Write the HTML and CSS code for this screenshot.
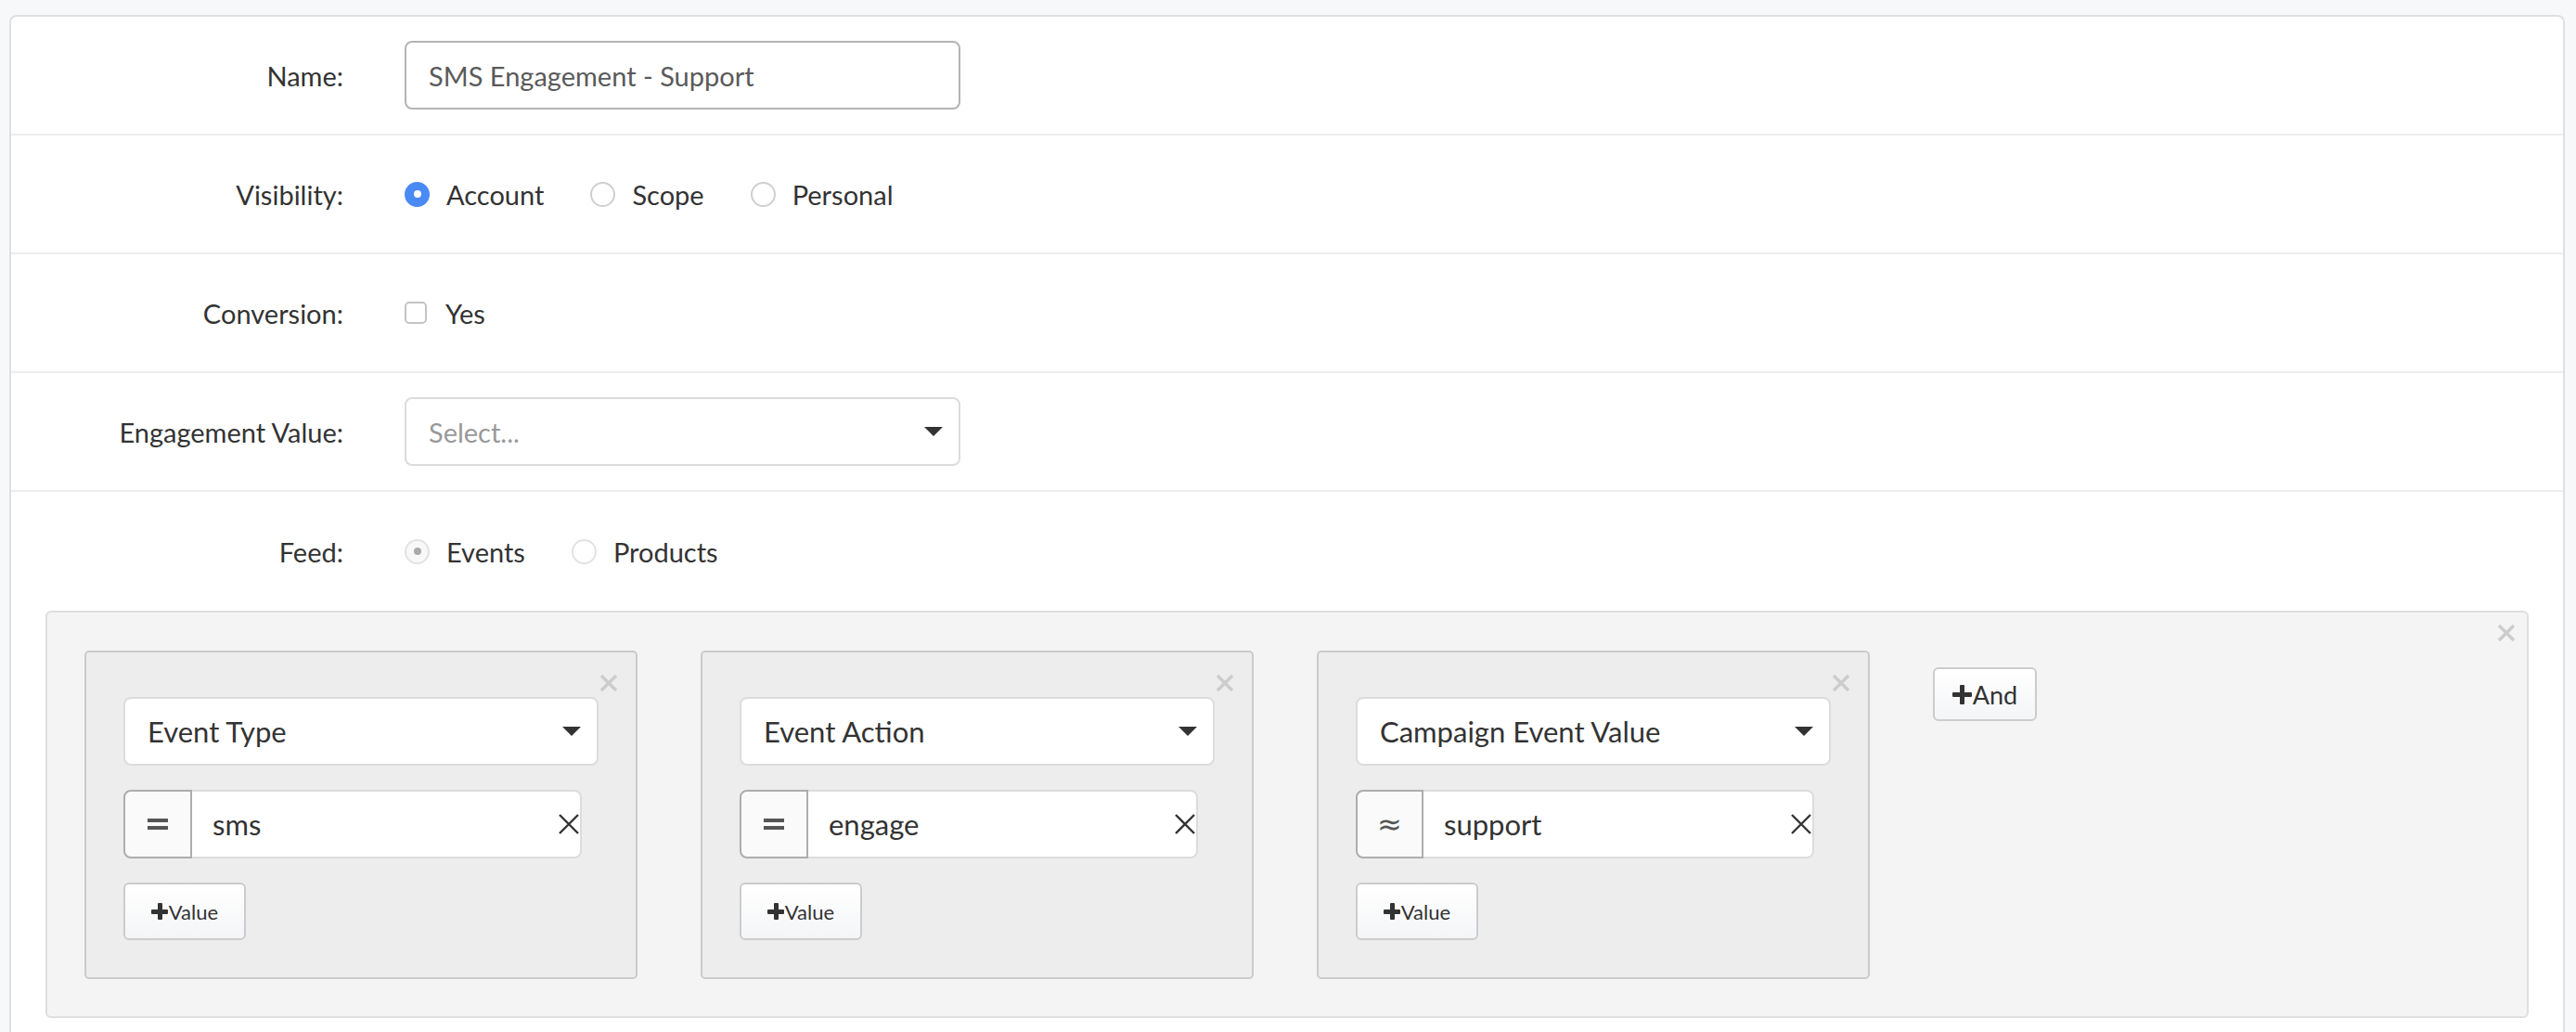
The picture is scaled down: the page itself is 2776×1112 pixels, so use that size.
FILE: index.html
```html
<!DOCTYPE html>
<html lang="en">
<head>
  <meta charset="UTF-8" />
  <title>Engagement</title>
  <link rel="stylesheet" href="styles.css">
</head>
<body>
  <div class="card">
    <div class="row">
      <div class="row-label">Name:</div>
      <div class="row-field">
        <div class="text-input">SMS Engagement - Support</div>
      </div>
    </div>

    <div class="row">
      <div class="row-label">Visibility:</div>
      <div class="row-field">
        <span class="choice"><span class="radio checked"></span>Account</span>
        <span class="choice"><span class="radio"></span>Scope</span>
        <span class="choice"><span class="radio"></span>Personal</span>
      </div>
    </div>

    <div class="row">
      <div class="row-label">Conversion:</div>
      <div class="row-field">
        <span class="choice"><span class="checkbox"></span>Yes</span>
      </div>
    </div>

    <div class="row">
      <div class="row-label">Engagement Value:</div>
      <div class="row-field">
        <div class="select wide placeholder">Select...<span class="caret"></span></div>
      </div>
    </div>

    <div class="row last">
      <div class="row-label">Feed:</div>
      <div class="row-field">
        <span class="choice"><span class="radio disabled checked"></span>Events</span>
        <span class="choice"><span class="radio disabled"></span>Products</span>
      </div>
    </div>

    <div class="filter-panel">
      <span class="close-x panel-x">
        <svg viewBox="0 0 20 20" width="20" height="20"><path d="M2 2L18 18M18 2L2 18" /></svg>
      </span>

      <div class="cond">
        <span class="close-x cond-x">
          <svg viewBox="0 0 20 20" width="20" height="20"><path d="M2 2L18 18M18 2L2 18" /></svg>
        </span>
        <div class="select">Event Type<span class="caret"></span></div>
        <div class="value-row">
          <div class="op"><span class="eq"></span></div>
          <div class="value-input">sms
            <svg class="remove" viewBox="0 0 24 22" width="24" height="22"><path d="M2 1L22 21M22 1L2 21" /></svg>
          </div>
        </div>
        <button class="btn value-btn"><span class="plus"></span>Value</button>
      </div>

      <div class="cond">
        <span class="close-x cond-x">
          <svg viewBox="0 0 20 20" width="20" height="20"><path d="M2 2L18 18M18 2L2 18" /></svg>
        </span>
        <div class="select">Event Action<span class="caret"></span></div>
        <div class="value-row">
          <div class="op"><span class="eq"></span></div>
          <div class="value-input">engage
            <svg class="remove" viewBox="0 0 24 22" width="24" height="22"><path d="M2 1L22 21M22 1L2 21" /></svg>
          </div>
        </div>
        <button class="btn value-btn"><span class="plus"></span>Value</button>
      </div>

      <div class="cond">
        <span class="close-x cond-x">
          <svg viewBox="0 0 20 20" width="20" height="20"><path d="M2 2L18 18M18 2L2 18" /></svg>
        </span>
        <div class="select">Campaign Event Value<span class="caret"></span></div>
        <div class="value-row">
          <div class="op approx">≈</div>
          <div class="value-input">support
            <svg class="remove" viewBox="0 0 24 22" width="24" height="22"><path d="M2 1L22 21M22 1L2 21" /></svg>
          </div>
        </div>
        <button class="btn value-btn"><span class="plus"></span>Value</button>
      </div>

      <button class="btn and-btn"><span class="plus big"></span>And</button>
    </div>
  </div>
</body>
</html>
```

FILE: styles.css
```css
body {
  margin: 0;
  padding: 0;
  background-color: #f7f8fa;
  font-family: Lato, 'Noto Sans', sans-serif;
  color: #333;
}

.card {
  margin: 16px 12px 0 10px;
  background: #fff;
  border: 2px solid #e0e0e0;
  border-bottom: none;
  border-radius: 8px 8px 0 0;
  padding-bottom: 40px;
}

.row {
  display: flex;
  align-items: center;
  height: 126px;
  border-bottom: 2px solid #eeeeee;
}

.row.last {
  height: 128px;
  border-bottom: none;
}

.row-label {
  width: 358px;
  text-align: right;
  font-size: 29px;
  color: #333;
}

.row-field {
  margin-left: 66px;
  display: flex;
  align-items: center;
}

.text-input {
  box-sizing: border-box;
  width: 599px;
  height: 74px;
  border: 2px solid #b4b4b4;
  border-radius: 8px;
  padding-left: 24px;
  display: flex;
  align-items: center;
  font-size: 29px;
  color: #5a5a5a;
}

.choice {
  display: inline-flex;
  align-items: center;
  font-size: 29px;
  color: #333;
  margin-right: 50px;
}

.radio {
  box-sizing: border-box;
  width: 27px;
  height: 27px;
  border-radius: 50%;
  border: 2px solid #cfcfcf;
  background: #fff;
  margin-right: 18px;
  position: relative;
}

.radio.checked {
  background: #4a8af4;
  border-color: #4a8af4;
}

.radio.checked::after {
  content: "";
  position: absolute;
  left: 50%;
  top: 50%;
  width: 8px;
  height: 8px;
  margin: -4px 0 0 -4px;
  border-radius: 50%;
  background: #fff;
}

.radio.disabled {
  border-color: #e2e2e2;
  background: #fff;
}

.radio.disabled.checked {
  background: #f8f8f8;
}

.radio.disabled.checked::after {
  background: #aaa;
}

.checkbox {
  box-sizing: border-box;
  width: 24px;
  height: 24px;
  border: 2px solid #c4c4c4;
  border-radius: 5px;
  margin-right: 20px;
}

.select {
  box-sizing: border-box;
  position: relative;
  height: 74px;
  border: 2px solid #dcdcdc;
  border-radius: 8px;
  background: #fff;
  padding-left: 24px;
  display: flex;
  align-items: center;
  font-size: 31px;
  color: #333;
}

.select.wide {
  width: 599px;
  font-size: 29px;
}

.select.placeholder {
  color: #999;
}

.caret {
  position: absolute;
  right: 17px;
  top: 50%;
  margin-top: -5px;
  width: 0;
  height: 0;
  border-left: 10px solid transparent;
  border-right: 10px solid transparent;
  border-top: 10px solid #333;
}

.filter-panel {
  position: relative;
  margin: 0 37px;
  background: #f4f4f4;
  border: 2px solid #dedede;
  border-radius: 6px;
  padding: 41px 40px 40px 40px;
  display: flex;
  align-items: flex-start;
  gap: 68px;
}

.close-x {
  position: absolute;
  width: 20px;
  height: 20px;
}

.close-x svg path {
  stroke: #cccccc;
  stroke-width: 3.5;
  fill: none;
}

.panel-x {
  right: 12px;
  top: 12px;
}

.cond {
  box-sizing: border-box;
  position: relative;
  width: 596px;
  height: 354px;
  background: #ededed;
  border: 2px solid #cbcbcb;
  border-radius: 5px;
  padding: 48px 40px 40px 40px;
}

.cond-x {
  right: 19px;
  top: 23px;
}

.value-row {
  display: flex;
  width: 494px;
  height: 74px;
  margin-top: 26px;
}

.op {
  box-sizing: border-box;
  width: 74px;
  height: 74px;
  background: #fafafa;
  border: 2px solid #adadad;
  border-radius: 8px 0 0 8px;
  display: flex;
  align-items: center;
  justify-content: center;
}

.op.approx {
  width: 73px;
  font-size: 32px;
  color: #555;
  font-family: 'DejaVu Sans', sans-serif;
}

.eq {
  width: 22px;
  height: 4px;
  border-top: 4px solid #555;
  border-bottom: 4px solid #555;
}

.value-input {
  box-sizing: border-box;
  flex: 1;
  height: 74px;
  background: #fff;
  border: 2px solid #dcdcdc;
  border-left: none;
  border-radius: 0 8px 8px 0;
  padding-left: 22px;
  display: flex;
  align-items: center;
  justify-content: space-between;
  font-size: 31px;
  color: #333;
}

.remove path {
  stroke: #333;
  stroke-width: 2.4;
  fill: none;
}

.btn {
  box-sizing: border-box;
  display: inline-flex;
  align-items: center;
  justify-content: center;
  background: linear-gradient(#ffffff, #f4f5f7);
  border: 2px solid #cccccc;
  border-radius: 6px;
  font-family: Lato, 'Noto Sans', sans-serif;
  color: #333;
  padding: 0;
  cursor: pointer;
}

.value-btn {
  width: 132px;
  height: 62px;
  margin-top: 26px;
  font-size: 22px;
}

.and-btn {
  width: 112px;
  height: 58px;
  margin-top: 18px;
  font-size: 27px;
}

.plus {
  position: relative;
  width: 18px;
  height: 18px;
  margin-right: 1px;
}

.plus::before,
.plus::after {
  content: "";
  position: absolute;
  background: #333;
  border-radius: 1px;
}

.plus::before {
  left: 0;
  right: 0;
  top: 7px;
  height: 5px;
}

.plus::after {
  top: 0;
  bottom: 0;
  left: 7px;
  width: 5px;
}

.plus.big {
  width: 21px;
  height: 21px;
}

.plus.big::before {
  top: 8px;
  height: 5px;
}

.plus.big::after {
  left: 8px;
  width: 5px;
}
```
